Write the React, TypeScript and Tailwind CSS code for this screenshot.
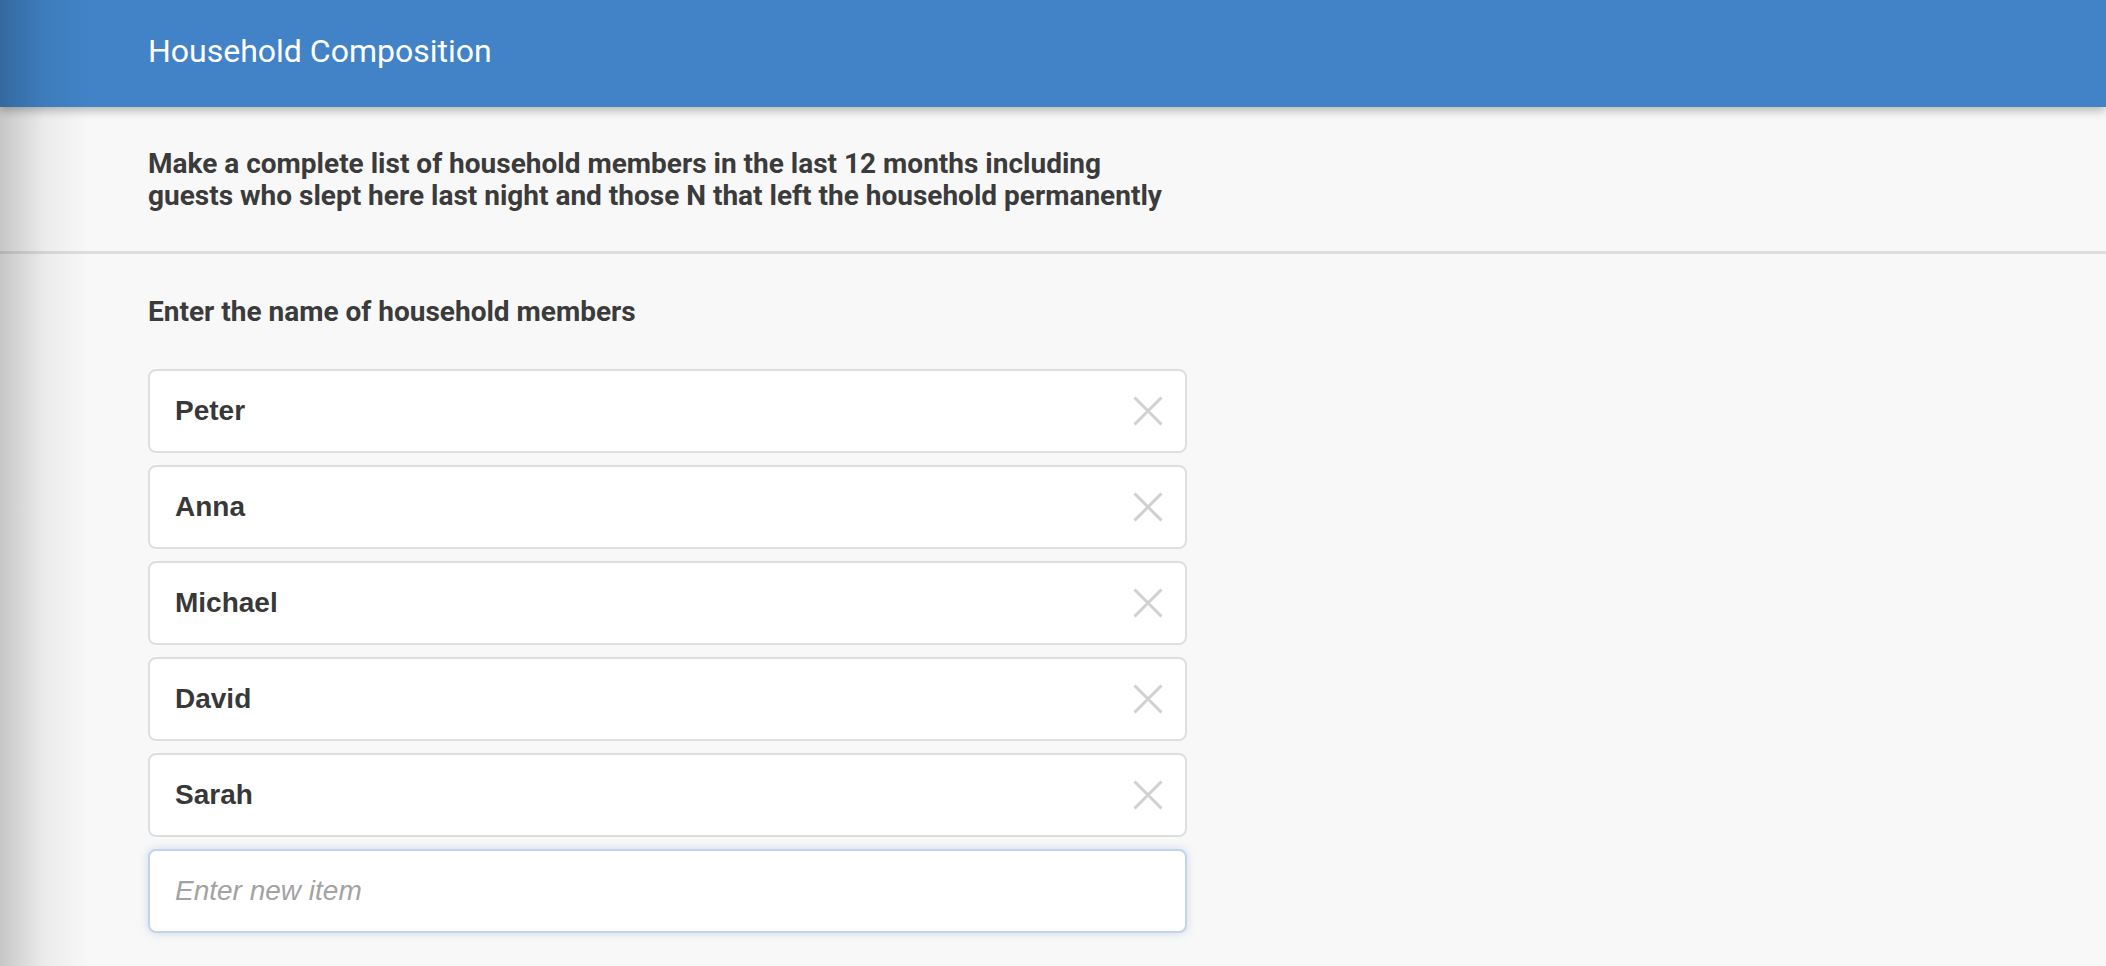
const members = ['Peter', 'Anna', 'Michael', 'David', 'Sarah'];

function MemberRow({ name }: { name: string }) {
    return (
        <div className="flex h-[84px] items-center justify-between rounded-[8px] border-2 border-[#dcdfe2] bg-white pl-[25px] pr-[22px]">
            <span className="font-['Liberation_Sans',Arial,sans-serif] text-[28px] font-bold text-[#383838]">{name}</span>
            <svg viewBox="0 0 30 30" className="h-[30px] w-[30px] text-[#d0d0d0]" fill="none" stroke="currentColor" strokeWidth={3}>
                <path d="M1.5 1.5 L28.5 28.5 M28.5 1.5 L1.5 28.5" />
            </svg>
        </div>
    );
}

export default function App() {
    return (
        <div className="relative min-h-[966px] overflow-hidden bg-[#f8f8f8] font-['Roboto','Noto_Sans',sans-serif]">
            <header className="relative z-10 flex h-[107px] items-center bg-[#4183c6] px-[148px] shadow-[0_3px_10px_rgba(0,0,0,0.3)]">
                <h1 className="-mt-[6px] text-[32px] font-normal text-white">Household Composition</h1>
            </header>

            <section className="border-b-[3px] border-[#dcdfe2] px-[148px] pb-[39px] pt-[41px]">
                <p className="text-[28px] font-bold leading-[32px] text-[#3b3b3b]">
                    Make a complete list of household members in the last 12 months including
                    <br />
                    guests who slept here last night and those N that left the household permanently
                </p>
            </section>

            <section className="px-[148px] pt-[42px]">
                <h2 className="text-[28px] font-bold leading-[32px] text-[#3b3b3b]">Enter the name of household members</h2>
                <div className="mt-[41px] flex w-[1039px] flex-col gap-[12px]">
                    {members.map((m) => (
                        <MemberRow key={m} name={m} />
                    ))}
                    <input
                        className="h-[84px] rounded-[8px] border-2 border-[#c3d4ea] bg-white px-[25px] font-['Liberation_Sans',Arial,sans-serif] text-[28px] text-[#333] shadow-[0_0_10px_rgba(120,160,210,0.35)] outline-none placeholder:italic placeholder:text-[#a3a3a3]"
                        placeholder="Enter new item"
                    />
                </div>
            </section>

            <div className="pointer-events-none absolute inset-y-0 left-0 z-20 w-[90px] bg-gradient-to-r from-black/20 via-black/5 to-transparent" />
        </div>
    );
}
